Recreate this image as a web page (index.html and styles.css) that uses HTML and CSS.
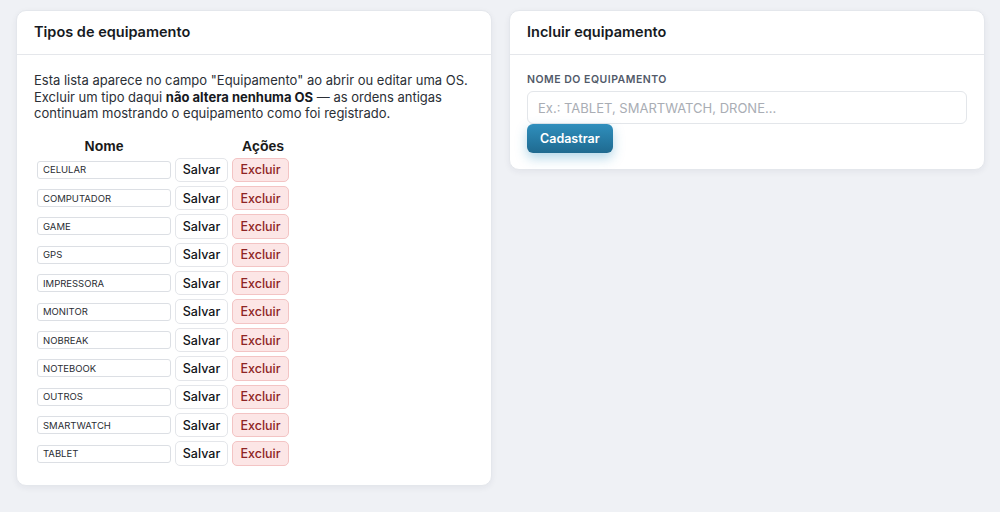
FILE: index.html
```html
<!DOCTYPE html>
<html lang="pt-BR">
<head>
    <meta charset="UTF-8">
    <meta name="viewport" content="width=device-width, initial-scale=1.0">
    <title>Tipos de equipamento</title>
    <link rel="stylesheet" href="styles.css">
</head>
<body>
    <div class="page">
        <!-- Lista de tipos -->
        <div class="card">
            <div class="card-header">Tipos de equipamento</div>
            <div class="card-body">
                <p class="intro">
                    Esta lista aparece no campo "Equipamento" ao abrir ou editar uma OS.
                    Excluir um tipo daqui <strong>não altera nenhuma OS</strong> — as ordens antigas
                    continuam mostrando o equipamento como foi registrado.
                </p>

                <table class="types">
                    <thead>
                        <tr>
                            <th>Nome</th>
                            <th></th>
                            <th class="col-actions">Ações</th>
                        </tr>
                    </thead>
                    <tbody id="typeRows"></tbody>
                </table>
            </div>
        </div>

        <!-- Novo tipo -->
        <div class="card">
            <div class="card-header">Incluir equipamento</div>
            <div class="card-body">
                <label class="field-label" for="newType">Nome do equipamento</label>
                <input type="text" id="newType" class="field-input" placeholder="Ex.: TABLET, SMARTWATCH, DRONE...">
                <button type="button" class="btn-primary">Cadastrar</button>
            </div>
        </div>
    </div>

    <script>
        const tipos = ['CELULAR', 'COMPUTADOR', 'GAME', 'GPS', 'IMPRESSORA', 'MONITOR',
            'NOBREAK', 'NOTEBOOK', 'OUTROS', 'SMARTWATCH', 'TABLET'];

        const tbody = document.getElementById('typeRows');
        tipos.forEach(nome => {
            const tr = document.createElement('tr');
            tr.innerHTML = `
                <td><input type="text" class="type-input" value="${nome}"></td>
                <td><button type="button" class="btn-save">Salvar</button></td>
                <td><button type="button" class="btn-delete">Excluir</button></td>`;
            tbody.appendChild(tr);
        });
    </script>
</body>
</html>
```

FILE: styles.css
```css
body {
    font-family: Inter, "Noto Sans", sans-serif;
    background-color: #eff1f5;
    margin: 0;
    color: #222;
}

.page {
    display: grid;
    grid-template-columns: 1fr 1fr;
    gap: 17px;
    padding: 10px 15px 16px 16px;
    align-items: start;
}

.card {
    background-color: white;
    border: 1px solid #e4e7ec;
    border-radius: 10px;
    box-shadow: 0 2px 6px rgba(30, 40, 60, 0.06);
}

.card-header {
    padding: 12px 17px 13px;
    font-size: 14.5px;
    font-weight: 600;
    line-height: 18px;
    color: #161a22;
    border-bottom: 1px solid #e5e7eb;
}

.card-body {
    padding: 17px 17px 16px 17px;
}

.intro {
    margin: 0 0 13px;
    font-size: 13px;
    line-height: 16.5px;
    color: #2b2f36;
}

.intro strong {
    font-weight: 700;
    color: #16191e;
}

.types {
    border-spacing: 2px;
}

.types th {
    font-family: "Liberation Sans", Arial, sans-serif;
    font-size: 14px;
    font-weight: bold;
    color: #1a1a1a;
    padding: 1px;
    line-height: 16px;
}

.types th.col-actions {
    padding-left: 6px;
}

.types td {
    padding: 1px;
    vertical-align: middle;
}

.type-input {
    width: 134px;
    height: 18px;
    box-sizing: border-box;
    border: 1px solid #dcdfe4;
    border-radius: 3px;
    padding: 0 5px;
    font-family: Inter, sans-serif;
    font-size: 9.5px;
    color: #2a2d33;
    display: block;
}

.btn-save,
.btn-delete {
    height: 24.4px;
    box-sizing: border-box;
    border-radius: 5px;
    font-family: Inter, sans-serif;
    font-size: 12.5px;
    font-weight: 500;
    padding: 0 6px;
    cursor: pointer;
    display: block;
}

.btn-save {
    background-color: white;
    border: 1px solid #e4e6ea;
    color: #111317;
    width: 53px;
}

.btn-delete {
    background-color: #fce6e6;
    border: 1px solid #f3c4c4;
    color: #8e2424;
    width: 57px;
}

.field-label {
    display: block;
    font-size: 10.5px;
    font-weight: 600;
    letter-spacing: 0.5px;
    text-transform: uppercase;
    color: #525a69;
    line-height: 13px;
    margin: 1px 0 5px;
}

.field-input {
    display: block;
    width: 100%;
    height: 33px;
    box-sizing: border-box;
    border: 1px solid #e3e6ea;
    border-radius: 6px;
    padding: 0 10px;
    font-family: Inter, sans-serif;
    font-size: 13px;
}

.field-input::placeholder {
    color: #a9adb4;
}

.btn-primary {
    display: block;
    height: 29px;
    padding: 0 13px;
    border: none;
    border-radius: 6px;
    background: linear-gradient(180deg, #2f8fbd, #1f6a90);
    color: white;
    font-family: Inter, sans-serif;
    font-size: 12.5px;
    font-weight: 600;
    box-shadow: 0 5px 12px rgba(40, 140, 190, 0.35);
    cursor: pointer;
}
```
